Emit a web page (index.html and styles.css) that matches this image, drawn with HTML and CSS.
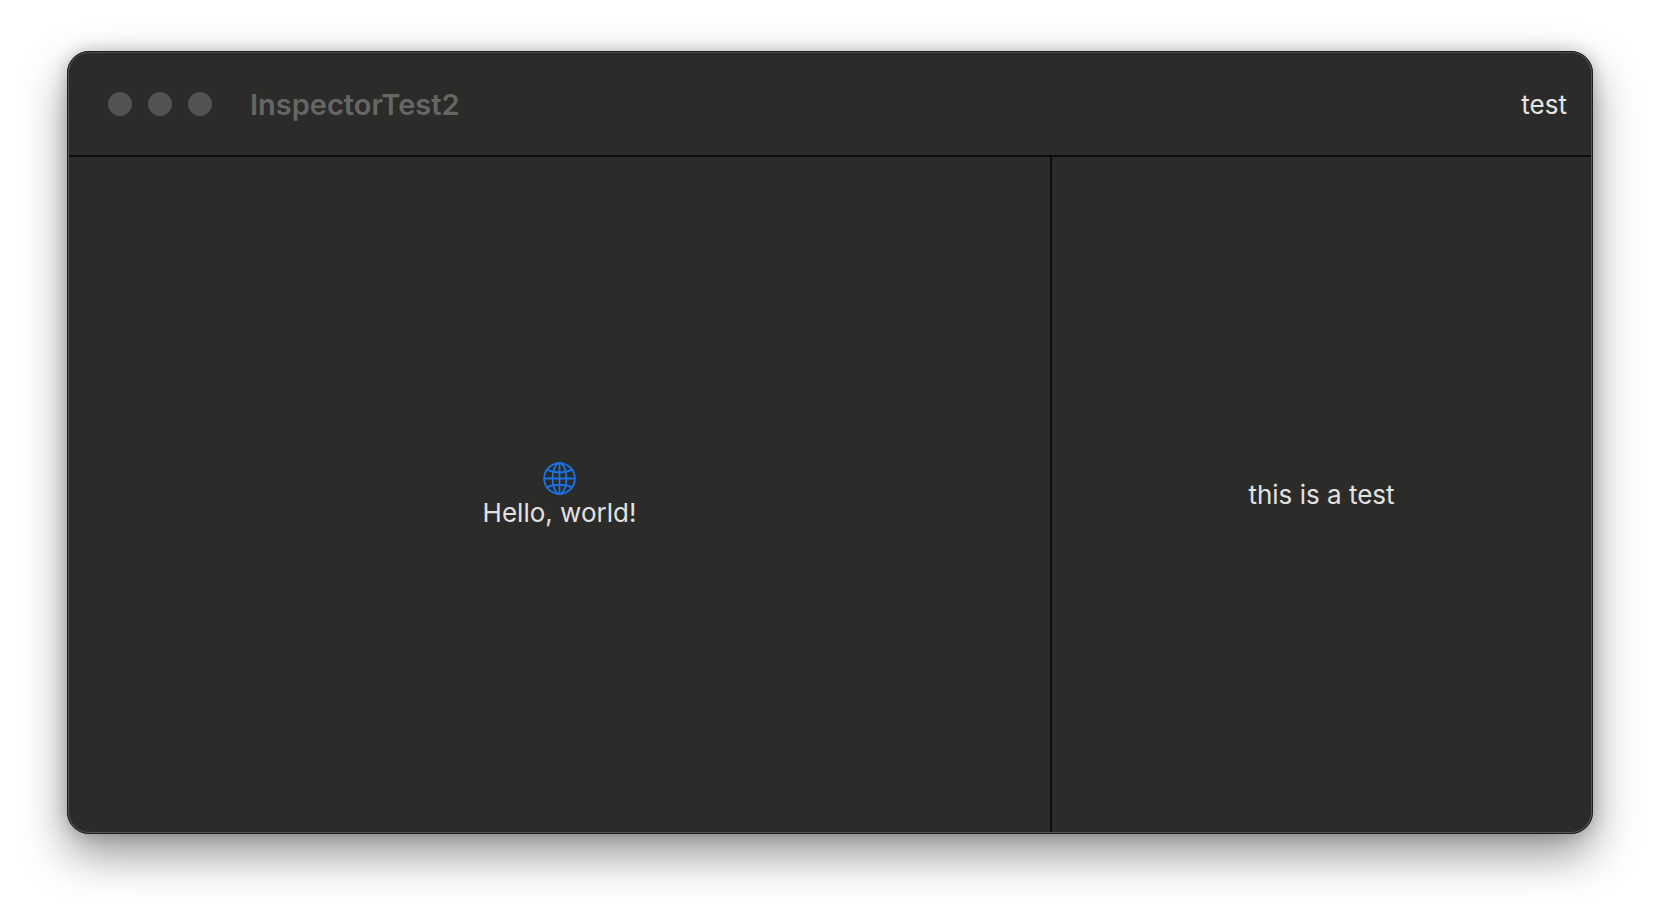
FILE: index.html
```html
<!DOCTYPE html>
<html lang="en">
<head>
    <meta charset="UTF-8">
    <meta name="viewport" content="width=device-width, initial-scale=1.0">
    <title>InspectorTest2</title>
    <link rel="stylesheet" href="styles.css">
</head>
<body>
    <div class="window">
        <header class="titlebar">
            <div class="lights">
                <span class="light"></span>
                <span class="light"></span>
                <span class="light"></span>
            </div>
            <h1 class="app-title">InspectorTest2</h1>
            <span class="toolbar-item">test</span>
        </header>
        <div class="panes">
            <main class="content">
                <svg class="globe" viewBox="0 0 33 33" fill="none" stroke="#1a74e6" stroke-width="1.8" aria-hidden="true">
                    <circle cx="16.5" cy="16.5" r="15.4"/>
                    <ellipse cx="16.5" cy="16.5" rx="7" ry="15.4"/>
                    <path d="M16.5 1.1V31.9M1.1 16.5H31.9M4 7.6C11 11.2 22 11.2 29 7.6M4 25.4C11 21.8 22 21.8 29 25.4"/>
                </svg>
                <p class="label">Hello, world!</p>
            </main>
            <aside class="inspector">
                <p class="label">this is a test</p>
            </aside>
        </div>
    </div>
</body>
</html>
```

FILE: styles.css
```css
* {
    box-sizing: border-box;
}
html, body {
    height: 100%;
}
body {
    margin: 0;
    padding: 51px 67px 84px;
    background-color: #ffffff;
    font-family: 'Inter', 'Liberation Sans', sans-serif;
    overflow: hidden;
}
p, h1 {
    margin: 0;
}
.window {
    display: flex;
    flex-direction: column;
    height: 783px;
    background-color: #2b2b2a;
    border: 2px solid #565655;
    border-top-color: #4a4a49;
    border-radius: 22px;
    outline: 1px solid #1c1c1c;
    outline-offset: -1px;
    box-shadow: 0 20px 46px rgba(0, 0, 0, 0.42), 0 0 16px rgba(0, 0, 0, 0.2);
    overflow: hidden;
}
.titlebar {
    display: flex;
    align-items: center;
    flex-shrink: 0;
    height: 104px;
    padding: 0 24px 0 39px;
    border-bottom: 2px solid #0c0c0c;
}
.lights {
    display: flex;
    gap: 16px;
}
.light {
    width: 24px;
    height: 24px;
    border-radius: 50%;
    background-color: #525251;
}
.app-title {
    margin-left: 38px;
    font-size: 29px;
    font-weight: 600;
    color: #666665;
}
.toolbar-item {
    margin-left: auto;
    font-size: 26px;
    color: #e6e6e6;
}
.panes {
    display: flex;
    flex: 1;
}
.content {
    display: flex;
    flex-direction: column;
    align-items: center;
    justify-content: center;
    gap: 2px;
    width: 983px;
    border-right: 2px solid #0c0c0c;
}
.inspector {
    display: flex;
    align-items: center;
    justify-content: center;
    flex: 1;
}
.globe {
    width: 33px;
    height: 33px;
}
.label {
    font-size: 26px;
    color: #e2e2e2;
}
```
